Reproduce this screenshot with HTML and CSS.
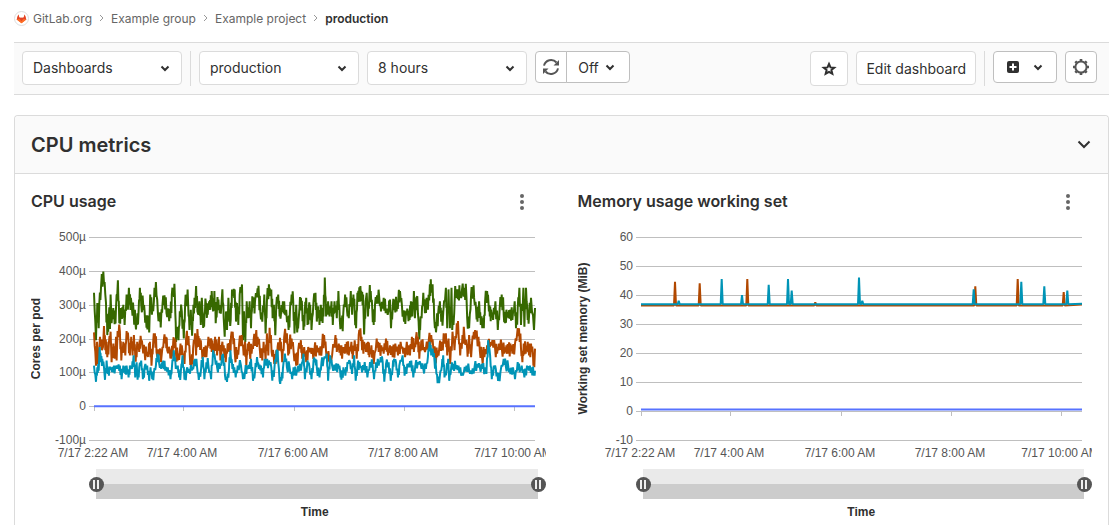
FILE: index.html
```html
<!DOCTYPE html>
<html lang="en">
<head>
<meta charset="utf-8">
<title>CPU metrics · production</title>
<link rel="stylesheet" href="styles.css">
</head>
<body>
<nav class="breadcrumbs" aria-label="Breadcrumbs">
  <a class="crumb" href="#"><span class="avatar"><svg viewBox="0 0 16 16" width="11" height="11" aria-hidden="true"><path fill="#fc6d26" d="M8 15 1 9.6 3.3 2l1.8 5h5.8l1.800-5L15 9.600z"/><path fill="#e24329" d="M1 9.600 3.300 2l1.800 5h5.800l1.800-5L15 9.600 8 12z"/><path fill="#fc6d26" d="M8 15 1 9.600 5.100 8.500 8 12l2.900-3.500L15 9.600z"/></svg></span>GitLab.org</a>
  <svg class="sep" viewBox="0 0 5 8" width="5" height="8" aria-hidden="true"><path d="m1 1 3 3-3 3"/></svg>
  <a class="crumb" href="#">Example group</a>
  <svg class="sep" viewBox="0 0 5 8" width="5" height="8" aria-hidden="true"><path d="m1 1 3 3-3 3"/></svg>
  <a class="crumb" href="#">Example project</a>
  <svg class="sep" viewBox="0 0 5 8" width="5" height="8" aria-hidden="true"><path d="m1 1 3 3-3 3"/></svg>
  <a class="crumb current" href="#" aria-current="page">production</a>
</nav>

<div class="toolbar">
  <div class="picker">
    <select aria-label="Dashboard"><option>Dashboards</option></select>
    <svg class="caret" viewBox="0 0 10 7" width="10" height="7" aria-hidden="true"><path d="m1.5 1.5 3.5 3.5 3.500-3.500"/></svg>
  </div>
  <span class="divider"></span>
  <div class="picker">
    <select aria-label="Environment"><option>production</option></select>
    <svg class="caret" viewBox="0 0 10 7" width="10" height="7" aria-hidden="true"><path d="m1.5 1.5 3.5 3.5 3.500-3.500"/></svg>
  </div>
  <div class="picker">
    <select aria-label="Time range"><option>8 hours</option></select>
    <svg class="caret" viewBox="0 0 10 7" width="10" height="7" aria-hidden="true"><path d="m1.5 1.5 3.5 3.5 3.500-3.500"/></svg>
  </div>
  <div class="refresh">
    <button class="btn strong square" type="button" aria-label="Refresh dashboard">
      <svg viewBox="0 0 18 18" width="18" height="18" aria-hidden="true"><path fill="none" stroke="#555" stroke-width="2" d="M2 7.600A7.200 7.200 0 0 1 14.500 4.500M16 10.400A7.200 7.200 0 0 1 3.500 13.500"/><path fill="#555" d="M17 2v5.500h-5.500zM1 16v-5.500h5.500z"/></svg>
    </button>
    <button class="btn strong interval" type="button">Off
      <svg class="caret" viewBox="0 0 10 7" width="10" height="7" aria-hidden="true"><path d="m1.5 1.5 3.5 3.5 3.500-3.500"/></svg>
    </button>
  </div>
  <div class="actions">
    <button class="btn star" type="button" aria-label="Star dashboard">
      <svg viewBox="0 0 16 16" width="16" height="16" aria-hidden="true"><path fill="none" stroke="#303030" stroke-width="2" d="m8 3 1.500 3.400 3.700.3-2.800 2.400.9 3.600L8 10.800l-3.300 1.900.9-3.600-2.800-2.400 3.700-.3z"/></svg>
    </button>
    <button class="btn edit" type="button">Edit dashboard</button>
    <span class="divider"></span>
    <button class="btn strong create" type="button" aria-label="Create">
      <svg viewBox="0 0 12 12" width="12" height="12" aria-hidden="true"><rect width="12" height="12" rx="2" fill="#303030"/><path stroke="#fff" stroke-width="2" d="M6 2.500v7M2.500 6h7"/></svg>
      <svg class="caret" viewBox="0 0 10 7" width="10" height="7" aria-hidden="true"><path d="m1.5 1.5 3.5 3.5 3.500-3.500"/></svg>
    </button>
    <button class="btn strong square gear" type="button" aria-label="Settings">
      <svg viewBox="0 0 16 16" width="16" height="16" aria-hidden="true"><g fill="none" stroke="#555"><circle cx="8" cy="8" r="5.600" stroke-width="2"/><path stroke-width="2.600" d="M8 0v2M8 14v2M0 8h2M14 8h2M2.300 2.300l1.400 1.400M12.300 12.300l1.400 1.400M2.300 13.700l1.400-1.400M12.300 3.700l1.400-1.400"/></g></svg>
    </button>
  </div>
</div>

<main class="panel">
  <header class="panel-head">
    <h1>CPU metrics</h1>
    <button class="plain" type="button" aria-label="Collapse CPU metrics"><svg viewBox="0 0 14 9" width="14" height="9" aria-hidden="true"><path fill="none" stroke="#303030" stroke-width="2" d="m1.500 1.500 5.500 5.500 5.500-5.500"/></svg></button>
  </header>
  <div class="charts">
    <section class="chart" data-chart="cpu">
      <div class="chart-head">
        <h2>CPU usage</h2>
        <button class="plain kebab" type="button" aria-label="CPU usage options"><svg viewBox="0 0 4 16" width="4" height="16" aria-hidden="true"><circle cx="2" cy="2" r="2"/><circle cx="2" cy="8" r="2"/><circle cx="2" cy="14" r="2"/></svg></button>
      </div>
      <svg class="plot" role="img" aria-label="Cores per pod over time"></svg>
      <div class="zoom">
        <input type="range" min="0" max="100" value="0" aria-label="CPU range start">
        <input type="range" min="0" max="100" value="100" aria-label="CPU range end">
      </div>
      <p class="axis-name">Time</p>
    </section>
    <section class="chart" data-chart="memory">
      <div class="chart-head">
        <h2>Memory usage working set</h2>
        <button class="plain kebab" type="button" aria-label="Memory usage options"><svg viewBox="0 0 4 16" width="4" height="16" aria-hidden="true"><circle cx="2" cy="2" r="2"/><circle cx="2" cy="8" r="2"/><circle cx="2" cy="14" r="2"/></svg></button>
      </div>
      <svg class="plot" role="img" aria-label="Working set memory over time"></svg>
      <div class="zoom">
        <input type="range" min="0" max="100" value="0" aria-label="Memory range start">
        <input type="range" min="0" max="100" value="100" aria-label="Memory range end">
      </div>
      <p class="axis-name">Time</p>
    </section>
  </div>
</main>
<script src="charts.js"></script>
</body>
</html>
```
FILE: styles.css
```css
* { box-sizing: border-box; }

body {
  margin: 0;
  padding: 8px 10px 0 14px;
  min-height: 100vh;
  display: flex;
  flex-direction: column;
  background: #fff;
  color: #303030;
  font-family: Inter, "Liberation Sans", sans-serif;
  font-size: 14px;
}

button, select { font: inherit; color: inherit; }
h1, h2, p { margin: 0; }

.breadcrumbs {
  display: flex;
  align-items: center;
  gap: 7px;
  height: 20px;
  margin-bottom: 14px;
  font-size: 12px;
}
.crumb {
  display: flex;
  align-items: center;
  gap: 4px;
  color: #666;
  text-decoration: none;
}
.crumb.current { color: #303030; font-weight: 600; }
.avatar {
  display: grid;
  place-items: center;
  width: 15px;
  height: 15px;
  border: 1px solid #ddd;
  border-radius: 50%;
}
.sep path { fill: none; stroke: #999; stroke-width: 1; }

.toolbar {
  display: flex;
  align-items: flex-start;
  gap: 8px;
  padding: 8px 12px 8px 8px;
  border-top: 1px solid #dbdbdb;
  border-bottom: 1px solid #dbdbdb;
  background: #fafafa;
}
.picker {
  display: grid;
  align-items: center;
  flex: 0 1 160px;
}
.picker select, .picker .caret { grid-area: 1 / 1; }
.picker .caret {
  justify-self: end;
  margin-right: 12px;
  pointer-events: none;
}
.picker select {
  appearance: none;
  width: 100%;
  height: 34px;
  padding: 0 28px 1px 10px;
  border: 1px solid #dbdbdb;
  border-radius: 4px;
  background: #fff;
}
.caret path { fill: none; stroke: #303030; stroke-width: 2; }
.divider { width: 1px; height: 35px; background: #dbdbdb; }

.btn {
  display: flex;
  align-items: center;
  justify-content: center;
  height: 34px;
  padding: 0 9px;
  border: 1px solid #dbdbdb;
  border-radius: 4px;
  background: #fff;
  white-space: nowrap;
}
.btn.strong { height: 32px; border-color: #bfbfbf; }
.btn.square { width: 32px; padding: 0; }
.btn.star { width: 38px; height: 35px; }
.btn.create { width: 64px; gap: 14px; }
.refresh { display: flex; }
.refresh .square { border-radius: 4px 0 0 4px; }
.refresh .interval {
  width: 64px;
  gap: 6px;
  padding: 0 12px 0 9px;
  margin-left: -1px;
  border-radius: 0 4px 4px 0;
}
.actions { display: flex; gap: 8px; margin-left: auto; }

.panel {
  flex: 1;
  margin-top: 20px;
  border: 1px solid #dbdbdb;
  border-bottom: 0;
  border-radius: 4px 4px 0 0;
}
.panel-head {
  display: flex;
  align-items: center;
  justify-content: space-between;
  height: 58px;
  padding: 0 17px 0 16px;
  border-bottom: 1px solid #dbdbdb;
  border-radius: 4px 4px 0 0;
  background: #fafafa;
}
h1 { font-size: 20px; font-weight: 600; }
h2 { padding-bottom: 2px; font-size: 16px; font-weight: 600; }
.plain {
  display: grid;
  place-items: center;
  padding: 0;
  border: 0;
  background: none;
}
.kebab { width: 16px; height: 24px; fill: #666; }

.charts { display: grid; grid-template-columns: 1fr 1fr; }
.chart { min-width: 0; padding: 16px 16px 0; }
.chart-head {
  display: flex;
  align-items: center;
  justify-content: space-between;
  height: 24px;
  padding-right: 16px;
}
.plot {
  display: block;
  width: 100%;
  height: 250px;
  margin-top: 5px;
  font-family: "Liberation Sans", Arial, sans-serif;
  font-size: 12px;
  fill: #555;
}
.plot .name { font-weight: 700; fill: #303030; }
.grid-line { stroke: #bfbfbf; }
.series { fill: none; stroke-width: 2; stroke-linejoin: bevel; }

.zoom {
  display: grid;
  height: 30px;
  margin-left: 58px;
  background: linear-gradient(#eaeaea 50%, #ccc 50%) center / calc(100% - 15px) 100% no-repeat;
}
.zoom input {
  grid-area: 1 / 1;
  appearance: none;
  width: 100%;
  height: 30px;
  margin: 0;
  background: none;
  pointer-events: none;
}
.zoom input::-webkit-slider-thumb {
  appearance: none;
  width: 15px;
  height: 15px;
  border-radius: 50%;
  background: linear-gradient(90deg, #555 4px, #eee 4px 6px, #555 6px 8px, #eee 8px 10px, #555 10px) center / 15px 9px no-repeat, #555;
  pointer-events: auto;
}
.axis-name {
  margin: 5px 10px 0 63px;
  font: 700 12px/16px "Liberation Sans", Arial, sans-serif;
  text-align: center;
}
```
FILE: charts.js
```js
const parse = (text, shift = 0) =>
  text.trim().split(/\s+/).map((pair) => {
    const [x, y] = pair.split(",").map(Number);
    return [x + shift, y];
  });

// Each series has two batches of samples; the second starts 780 units later.
const join = (first, second) => [...parse(first), ...parse(second, 780)];

function withSwings(points, amount) {
  const out = [];
  points.forEach(([x, y], i) => {
    out.push([x, y]);
    const next = points[i + 1];
    if (!next || next[0] - x < 4) return;
    const step = (next[0] - x) / 3;
    const sway = amount * (0.4 + ((i * 37) % 11) / 11);
    out.push([x + step, y + (next[1] - y) / 3 + sway * (next[1] > y ? 0.5 : -0.5)]);
    out.push([x + 2 * step, y + ((next[1] - y) * 2) / 3 + sway * (next[1] > y ? -0.6 : 0.6)]);
  });
  return out;
}

const podA = join(
  `222,335 228,195 232,305 236,230 238,303 243,350 250,398 256,330 258,305 262,210 266,250 268,292 270,228 272,330 275,245 280,290 284,242 288,290 294,372 298,245 302,290 306,258 310,300 314,240 320,330 324,285 327,350 329,300 333,320 336,290 341,280 347,240 351,240 356,280 360,350 364,300 370,300 374,280 380,232 384,268 388,218 391,330 396,270 402,310 408,367 414,275 420,250 424,265 428,300 434,328 440,275 446,275 452,260 456,330 461,350 465,330 469,190 473,235 476,195 480,280 486,280 492,200 496,300 500,330 505,305 509,225 513,285 517,208 521,300 526,290 529,355 533,280 536,270 539,310 543,240 546,320 549,260 553,235 557,318 560,290 564,270 568,310 572,285 576,340 580,280 584,340 588,245 592,295 596,315 600,275 605,300 608,345 612,260 615,205 619,280 622,225 626,320 629,250 633,255 637,345 641,325 645,345 649,250 652,305 656,240 660,330 667,360 670,195 673,280 677,190 681,310 685,260 690,310 694,230 698,325 702,290 706,310 714,348 718,325 722,280 728,250 734,330 738,215 742,310 748,360 752,325 755,345 759,260 763,300 767,210 770,300 776,330`,
  `0,265 4,270 10,310 16,270 20,285 27,225 31,280 36,330 41,310 45,215 50,300 53,218 57,250 60,290 64,320 68,290 72,225 76,285 80,320 84,240 88,290 92,300 96,225 102,310 108,335 112,250 116,295 120,240 124,300 128,265 132,265 136,380 140,265 146,310 150,265 156,310 160,240 165,310 172,260 177,340 181,255 187,230 191,265 197,330 203,280 208,260 214,340 218,270 222,330 226,280 230,230 234,335 238,310 243,355 247,310 251,330 254,212 259,310 262,335 266,265 270,330 274,340 279,280 283,240 287,300 293,328 300,315 305,280 313,320 319,275 328,285 332,315 335,230 340,290 346,315 352,280 357,315 362,340 368,295 374,250 380,280 386,275 391,255 395,310 399,265 404,340 407,260 411,320 414,325 420,198 424,265 427,260 432,335 437,275 442,320 446,285 452,360 456,335 460,360 465,260 467,230 472,240 477,275 482,310 486,250 492,275 500,350 504,230 508,345 512,230 517,350 519,225 525,275 528,355 532,320 538,345 542,320 548,340 556,350 562,320 564,260 570,230 576,330 580,350 585,320 591,285 595,250 600,310 605,240 612,260 614,230 618,310 624,340 628,310 632,265 636,285 642,255 649,310 656,225 662,290 668,330 674,270 678,245 682,285 688,260 694,285 700,255 707,310 711,230 716,290 721,350 726,240 733,350 736,235 741,350 746,255 750,265 756,320 765,225 768,290`
);
const podB = join(
  `222,218 228,120 231,190 234,125 240,205 246,165 249,175 252,237 256,165 260,190 262,145 267,190 272,220 275,130 280,185 284,140 288,205 290,135 293,222 300,220 304,135 310,190 316,150 320,222 326,190 330,150 334,205 338,150 342,210 346,150 350,145 352,190 358,160 362,208 368,175 374,160 380,148 386,160 390,190 395,120 400,190 405,215 410,160 418,150 426,155 432,195 438,205 442,165 450,165 455,140 460,190 464,200 468,165 474,135 480,160 486,180 494,125 499,200 506,207 510,150 515,112 520,170 526,215 529,150 533,228 538,175 543,195 548,140 553,175 560,145 566,205 572,170 578,195 582,150 586,205 592,150 598,205 602,135 606,175 612,180 618,130 624,185 630,160 634,205 639,220 645,160 652,140 658,180 666,210 672,150 676,190 680,120 684,185 690,165 696,155 702,195 708,200 714,205 720,175 728,135 732,190 738,135 742,215 746,150 750,232 756,160 762,150 768,125 774,175`,
  `0,180 4,190 8,130 14,205 22,215 26,150 30,185 36,200 42,165 50,120 56,165 64,195 68,140 74,175 80,130 86,175 96,155 104,160 112,180 120,150 128,180 134,210 140,160 150,130 158,150 168,210 172,160 178,185 184,150 190,175 196,155 202,190 208,150 216,190 220,140 226,195 232,140 238,210 243,230 248,165 254,190 260,160 266,190 270,145 276,180 283,125 292,200 298,160 306,180 313,155 320,200 326,150 332,180 340,145 348,185 356,150 364,190 372,155 380,165 388,180 392,150 398,205 404,160 410,200 416,205 420,140 426,195 432,165 440,170 448,190 456,210 462,175 468,150 474,145 480,170 488,190 496,185 500,215 504,150 508,200 513,125 520,220 526,165 533,245 538,215 543,150 550,210 556,205 564,170 568,155 570,210 576,145 579,190 584,220 590,200 598,205 602,165 608,150 616,145 624,180 632,175 640,195 648,170 654,155 660,185 668,175 676,155 682,180 688,155 694,185 700,155 708,185 714,210 720,230 726,170 730,130 734,185 740,155 746,190 750,150 756,185 762,150 766,115 768,170`
);
const podC = join(
  `222,120 228,72 232,115 236,105 239,175 243,130 247,140 252,115 255,78 260,135 264,95 268,110 274,115 280,100 286,120 294,110 300,120 305,80 310,120 316,95 320,120 326,85 330,120 336,110 341,150 346,85 350,130 353,78 358,115 364,135 369,80 374,115 382,120 388,75 392,115 397,80 402,100 408,120 413,155 418,125 424,110 430,135 436,105 444,115 452,80 456,110 462,165 468,110 474,120 478,85 483,100 488,150 494,78 500,105 508,110 516,105 522,120 526,140 532,115 537,78 544,110 549,145 554,80 560,130 566,120 574,80 580,165 586,140 592,115 600,110 606,135 610,155 616,90 622,72 628,110 632,165 638,110 644,115 648,85 654,120 664,120 670,80 676,100 682,120 690,110 694,140 700,75 706,100 712,145 718,110 724,120 730,85 735,140 740,120 748,135 755,115 758,75 765,120 770,150 774,165`,
  `0,75 6,75 10,110 16,155 22,115 30,115 38,80 42,115 50,90 56,120 64,105 72,155 76,80 84,135 90,115 96,80 102,135 108,140 112,115 120,85 126,130 132,135 142,155 146,75 152,150 158,120 168,105 176,125 182,105 186,78 192,115 198,90 204,130 212,130 218,95 224,150 229,75 234,115 240,130 248,100 256,130 264,85 272,130 280,120 284,80 290,130 298,120 304,145 310,130 315,72 320,125 328,130 334,75 340,115 344,140 350,130 356,85 360,120 370,150 376,90 384,125 390,115 396,135 402,85 408,120 416,130 424,125 432,110 440,110 446,145 451,190 456,150 460,170 466,130 470,120 475,68 482,90 488,120 492,150 496,85 502,105 507,140 510,75 516,115 522,125 530,110 538,120 546,90 554,100 562,120 570,105 578,95 586,115 594,125 602,115 610,110 618,115 622,95 627,195 633,150 638,80 644,120 650,110 657,75 664,100 674,140 680,120 688,115 694,95 702,115 708,80 716,130 722,100 728,120 736,85 744,120 750,105 758,115 764,90 768,105`
);

// A flat level with narrow peaks, given as [position, height].
function level(base, end, peaks) {
  const out = [[213, base]];
  peaks.forEach(([x, top]) => out.push([x - 3, base], [x, top], [x + 3, base]));
  out.push([1536, end]);
  return out;
}

const charts = {
  cpu: {
    name: "Cores per pod", unit: "µ", domain: [222, 1548], min: -100, max: 500, step: 100,
    series: [
      ["#5772ff", [[222, 0], [1548, 0]]],
      ["#366800", withSwings(podA, 40)],
      ["#b14800", withSwings(podB, 36)],
      ["#0094b6", withSwings(podC, 24)]
    ]
  },
  memory: {
    name: "Working set memory (MiB)", unit: "", domain: [213, 1536], min: -10, max: 60, step: 10,
    series: [
      ["#5772ff", [[213, 0.5], [1536, 0.5]]],
      ["#b14800", level(36.4, 36.7, [[315, 44.5], [389, 44], [532, 45.5], [736, 37.5], [1216, 43], [1343, 45.5], [1481, 41]])],
      ["#0094b6", level(36.8, 37, [[326, 38], [455, 45.5], [516, 40], [596, 43.5], [654, 45.5], [665, 41.5], [867, 46], [877, 38], [1211, 42], [1354, 44.5], [1423, 43], [1492, 41.5]])]
    ]
  }
};
const times = [[0, "7/17 2:22 AM"], [0.2024, "7/17 4:00 AM"], [0.4525, "7/17 6:00 AM"], [0.7025, "7/17 8:00 AM"], [0.953, "7/17 10:00 AM"]];

function draw(section) {
  const chart = charts[section.dataset.chart];
  const svg = section.querySelector(".plot");
  const left = 63;
  const right = svg.clientWidth - 11;
  const top = 18;
  const bottom = 221;
  const yAt = (v) => bottom - ((v - chart.min) / (chart.max - chart.min)) * (bottom - top);
  const xAt = (v) => left + ((v - chart.domain[0]) / (chart.domain[1] - chart.domain[0])) * (right - left);
  let out = "";
  for (let v = chart.min; v <= chart.max; v += chart.step) {
    const y = Math.round(yAt(v)) + 0.5;
    out += `<line class="grid-line" x1="${left - 5}" x2="${right}" y1="${y}" y2="${y}"/>`;
    out += `<text x="${left - 8}" y="${y + 3}" text-anchor="end">${v}${v ? chart.unit : ""}</text>`;
  }
  times.forEach(([part, label]) => {
    const x = Math.round(left + part * (right - left));
    const y = Math.round(yAt(0));
    out += `<line class="grid-line" x1="${x + 0.5}" x2="${x + 0.5}" y1="${y}" y2="${y + 5}"/>`;
    out += `<text x="${x - 1}" y="238" text-anchor="middle">${label}</text>`;
  });
  chart.series.forEach(([color, points]) => {
    const path = points.map(([x, y]) => `${xAt(x).toFixed(1)},${yAt(y).toFixed(1)}`).join(" ");
    out += `<polyline class="series" stroke="${color}" points="${path}"/>`;
  });
  const middle = (top + bottom) / 2;
  out += `<text class="name" transform="translate(9 ${middle}) rotate(-90)" text-anchor="middle">${chart.name}</text>`;
  svg.innerHTML = out;
}

const drawAll = () => document.querySelectorAll(".chart").forEach(draw);
drawAll();
window.addEventListener("resize", drawAll);
```
